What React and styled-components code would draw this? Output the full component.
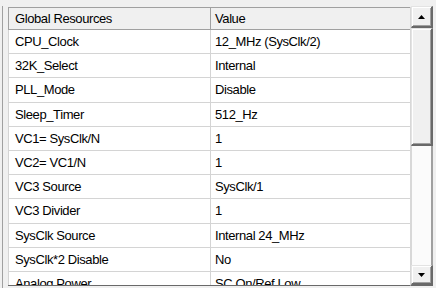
import React from 'react';
import styled, { createGlobalStyle } from 'styled-components';

const GlobalStyle = createGlobalStyle`
  html, body {
    margin: 0;
    padding: 0;
    background: #f0f0f0;
  }
  body {
    font-family: "Liberation Sans", Arial, sans-serif;
    font-size: 13px;
    letter-spacing: -0.4px;
    color: #000;
  }
`;

const Frame = styled.div`
  width: 436px;
  height: 288px;
  box-sizing: border-box;
  padding: 6px 3px 0 2px;
  overflow: hidden;
`;

const Panel = styled.div`
  display: flex;
  height: 282px;
  border-left: 1px solid #a0a0a0;
  padding-left: 5px;
  box-sizing: border-box;
`;

const Grid = styled.div`
  margin-top: 1px;
  width: 403px;
  height: 279px;
  box-sizing: border-box;
  border-right: 1px solid #d8d8d8;
  border-bottom: 1px solid #696969;
  overflow: hidden;
  background: #fff;
`;

const Row = styled.div`
  display: grid;
  grid-template-columns: 202px 1fr;
  height: ${p => (p.header ? '23px' : '24.2px')};
  box-sizing: border-box;
  background: ${p => (p.header ? '#f0f0f0' : '#fff')};
  border-top: ${p => (p.header ? '1px solid #a0a0a0' : 'none')};
  border-bottom: 1px solid ${p => (p.header ? '#a0a0a0' : '#d4d4d4')};
`;

const Cell = styled.div`
  display: flex;
  align-items: center;
  padding-left: ${p => (p.first ? '6px' : '4px')};
  border-left: 1px solid ${p => (p.header ? '#a0a0a0' : '#d4d4d4')};
  white-space: nowrap;
  overflow: hidden;
`;

const Scrollbar = styled.div`
  width: 22px;
  height: 280px;
  display: flex;
  flex-direction: column;
  background: #fbfbfb;
  border-bottom: 1px solid #696969;
  box-sizing: border-box;
`;

const Button = styled.div`
  height: ${p => p.h}px;
  flex: none;
  display: flex;
  align-items: center;
  justify-content: center;
  background: #f0f0f0;
  box-sizing: border-box;
  border-top: 1px solid #e3e3e3;
  border-left: 1px solid #e3e3e3;
  border-right: 2px solid #696969;
  border-bottom: 2px solid #696969;
  box-shadow: inset 1px 1px 0 #fff, inset -1px -1px 0 #a0a0a0;
`;

const Track = styled.div`
  flex: 1;
  border-left: 1px solid #d8d8d8;
  border-right: 2px solid #a0a0a0;
`;

const Arrow = ({ down }) => (
  <svg width="7" height="4" viewBox="0 0 7 4">
    <path d={down ? 'M0 0H7L3.5 4Z' : 'M0 4H7L3.5 0Z'} fill="#000" />
  </svg>
);

const rows = [
  ['CPU_Clock', '12_MHz (SysClk/2)'],
  ['32K_Select', 'Internal'],
  ['PLL_Mode', 'Disable'],
  ['Sleep_Timer', '512_Hz'],
  ['VC1= SysClk/N', '1'],
  ['VC2= VC1/N', '1'],
  ['VC3 Source', 'SysClk/1'],
  ['VC3 Divider', '1'],
  ['SysClk Source', 'Internal 24_MHz'],
  ['SysClk*2 Disable', 'No'],
  ['Analog Power', 'SC On/Ref Low'],
];

export default function App() {
  return (
    <>
      <GlobalStyle />
      <Frame>
        <Panel>
          <Grid>
            <Row header>
              <Cell header first>Global Resources</Cell>
              <Cell header>Value</Cell>
            </Row>
            {rows.map(([name, value]) => (
              <Row key={name}>
                <Cell first>{name}</Cell>
                <Cell>{value}</Cell>
              </Row>
            ))}
          </Grid>
          <Scrollbar>
            <Button h={22}>
              <Arrow />
            </Button>
            <Button h={118} />
            <Track />
            <Button h={20}>
              <Arrow down />
            </Button>
          </Scrollbar>
        </Panel>
      </Frame>
    </>
  );
}
